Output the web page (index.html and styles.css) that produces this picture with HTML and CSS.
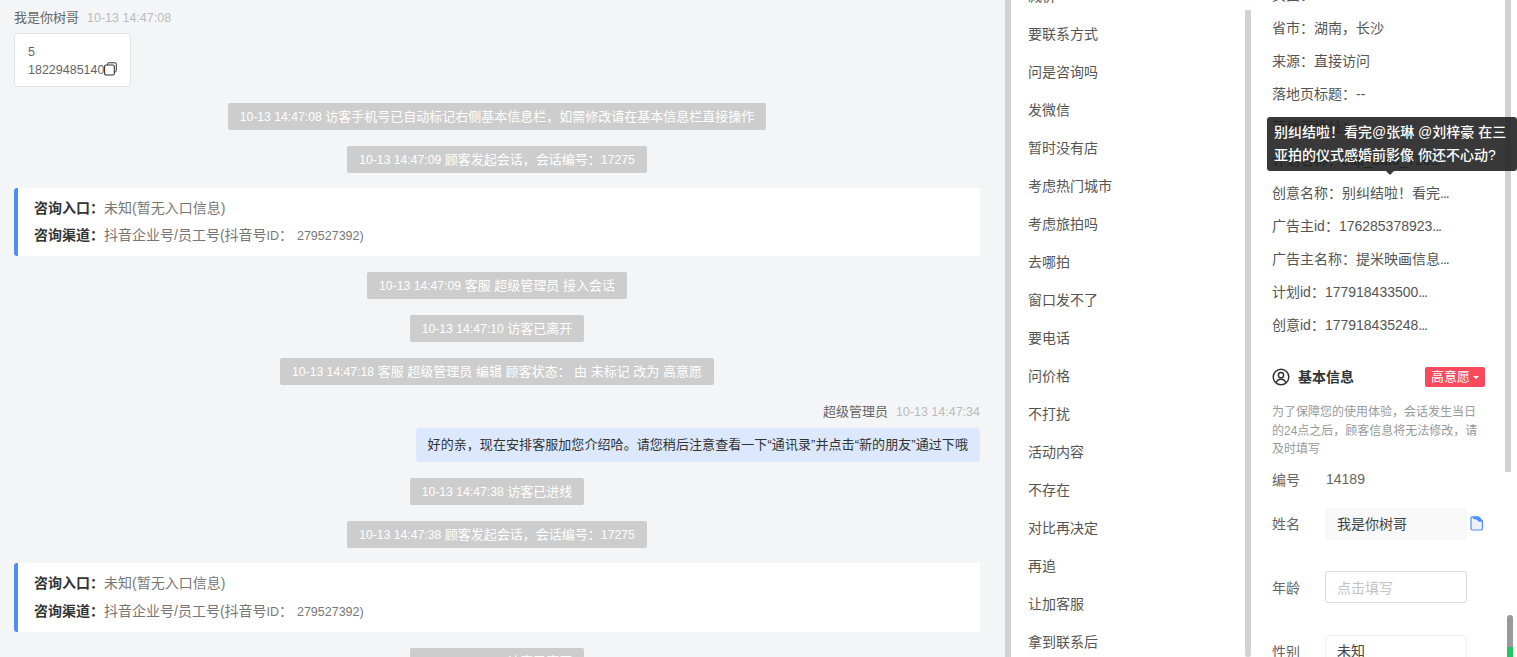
FILE: index.html
```html
<!DOCTYPE html>
<html lang="zh">
<head>
<meta charset="utf-8">
<title>会话</title>
<link rel="stylesheet" href="styles.css">
</head>
<body>
<div class="app">
  <main class="chat">
    <div class="meta"><span class="who">我是你树哥</span><span class="time">10-13 14:47:08</span></div>
    <div class="card">
      <div>5</div>
      <div class="phone">18229485140<svg class="copy" width="13" height="14" viewBox="0 0 13 14"><path d="M3.500 3V1.800q0-1 1-1h6.800q1 0 1 1v7q0 1-1 1h-1" fill="none" stroke="#333" stroke-width="1"/><rect x="0.600" y="3" width="9.700" height="10" rx="1.500" fill="none" stroke="#333" stroke-width="1.100"/></svg></div>
    </div>
    <div class="sys"><span class="ts">10-13 14:47:08</span> 访客手机号已自动标记右侧基本信息栏&#65292;如需修改请在基本信息栏直接操作</div>
    <div class="sys"><span class="ts">10-13 14:47:09</span> 顾客发起会话&#65292;会话编号&#65306;<span class="ts">17275</span></div>
    <div class="info">
      <p><b>咨询入口&#65306;</b>未知(暂无入口信息)</p>
      <p><b>咨询渠道&#65306;</b>抖音企业号/员工号(抖音号<span class="lat">ID</span>&#65306; <span class="lat">279527392)</span></p>
    </div>
    <div class="sys"><span class="ts">10-13 14:47:09</span> 客服 超级管理员 接入会话</div>
    <div class="sys"><span class="ts">10-13 14:47:10</span> 访客已离开</div>
    <div class="sys"><span class="ts">10-13 14:47:18</span> 客服 超级管理员 编辑 顾客状态&#65306; 由 未标记 改为 高意愿</div>
    <div class="meta right"><span class="who">超级管理员</span><span class="time">10-13 14:47:34</span></div>
    <div class="bubble">好的亲&#65292;现在安排客服加您介绍哈。请您稍后注意查看一下“通讯录”并点击“新的朋友”通过下哦</div>
    <div class="sys"><span class="ts">10-13 14:47:38</span> 访客已进线</div>
    <div class="sys"><span class="ts">10-13 14:47:38</span> 顾客发起会话&#65292;会话编号&#65306;<span class="ts">17275</span></div>
    <div class="info late">
      <p><b>咨询入口&#65306;</b>未知(暂无入口信息)</p>
      <p><b>咨询渠道&#65306;</b>抖音企业号/员工号(抖音号<span class="lat">ID</span>&#65306; <span class="lat">279527392)</span></p>
    </div>
    <div class="sys"><span class="ts">10-13 14:47:40</span> 访客已离开</div>
  </main>
  <div class="bar"></div>
  <nav class="list">
    <div class="item">减价</div>
    <div class="item">要联系方式</div>
    <div class="item">问是咨询吗</div>
    <div class="item">发微信</div>
    <div class="item">暂时没有店</div>
    <div class="item">考虑热门城市</div>
    <div class="item">考虑旅拍吗</div>
    <div class="item">去哪拍</div>
    <div class="item">窗口发不了</div>
    <div class="item">要电话</div>
    <div class="item">问价格</div>
    <div class="item">不打扰</div>
    <div class="item">活动内容</div>
    <div class="item">不存在</div>
    <div class="item">对比再决定</div>
    <div class="item">再追</div>
    <div class="item">让加客服</div>
    <div class="item">拿到联系后</div>
  </nav>
  <div class="bar bar-list"></div>
  <aside class="panel">
    <div class="rows">
      <div class="row">页面&#65306;</div>
      <div class="row">省市&#65306;湖南&#65292;长沙</div>
      <div class="row">来源&#65306;直接访问</div>
      <div class="row">落地页标题&#65306;--</div>
      <div class="row">落地页地址&#65306;</div>
      <div class="row">计划名称&#65306;cup_auto_720<span class="dots">...</span></div>
      <div class="row">创意名称&#65306;别纠结啦&#65281;看完<span class="dots">...</span></div>
      <div class="row">广告主id&#65306;176285378923<span class="dots">...</span></div>
      <div class="row">广告主名称&#65306;提米映画信息<span class="dots">...</span></div>
      <div class="row">计划id&#65306;177918433500<span class="dots">...</span></div>
      <div class="row">创意id&#65306;177918435248<span class="dots">...</span></div>
    </div>
    <div class="head">
      <svg class="user" width="18" height="18" viewBox="0 0 18 18"><circle cx="9" cy="9" r="7.800" fill="none" stroke="#333" stroke-width="1.500"/><circle cx="9" cy="7.200" r="2.600" fill="none" stroke="#333" stroke-width="1.500"/><path d="M4 14.600c1-2.400 2.800-3.400 5-3.400s4 1 5 3.400" fill="none" stroke="#333" stroke-width="1.500"/></svg>
      <span class="title">基本信息</span>
      <span class="tag">高意愿<i class="caret"></i></span>
    </div>
    <p class="note">为了保障您的使用体验&#65292;会话发生当日的24点之后&#65292;顾客信息将无法修改&#65292;请及时填写</p>
    <div class="field f-no"><label>编号</label><span class="val">14189</span></div>
    <div class="field f-name"><label>姓名</label><div class="input filled">我是你树哥</div>
      <svg class="note-ic" width="14" height="15" viewBox="0 0 14 15"><path d="M1 2.200q0-1.400 1.400-1.400h6l4 4v7.800q0 1.400-1.400 1.400H2.400q-1.400 0-1.400-1.400z" fill="#eef2ff" stroke="#4d8ef7" stroke-width="1.200"/><path d="M3 1h5.500l3.500 4v.8H8.500Q7.500 3 3 3z" fill="#4d8ef7"/></svg>
    </div>
    <div class="field f-age"><label>年龄</label><div class="input empty">点击填写</div></div>
    <div class="field f-sex"><label>性别</label><div class="input plain">未知</div></div>
  </aside>
  <div class="bar bar-panel"></div>
  <div class="edge"><div class="thumb"></div><div class="green"></div></div>
  <div class="tip">别纠结啦&#65281;看完@张琳 @刘梓豪 在三亚拍的仪式感婚前影像 你还不心动?<i class="tip-arrow"></i></div>
</div>
</body>
</html>
```
FILE: styles.css
```css
* { box-sizing: border-box; }
html, body { margin: 0; height: 100%; overflow: hidden; }
body { font-family: "Liberation Sans", "Noto Sans CJK SC", sans-serif; font-size: 13px; color: #333; background: #f4f5f7; }
.app { display: flex; width: 1517px; height: 657px; overflow: hidden; position: relative; }

.chat { width: 1005px; flex: none; padding: 9px 25px 0 14px; background: #f4f5f7; display: flex; flex-direction: column; height: 657px; overflow: hidden; }
.meta { display: flex; gap: 8px; height: 18px; line-height: 18px; align-items: center; flex: none; }
.meta.right { justify-content: flex-end; margin-top: 18px; }
.who { color: #666; }
.time { color: #bbb; font-size: 12.500px; }
.ts { font-size: 12.200px; }
.lat { font-size: 12.500px; }
.card { width: 117px; height: 54px; margin-top: 6px; flex: none; background: #fff; border: 1px solid #dfe1e5; border-radius: 4px; padding: 9px 13px 0; line-height: 18px; color: #666; font-size: 12.500px; }
.phone { display: flex; align-items: center; }
.copy { flex: none; margin-top: -2px; }
.sys { align-self: center; height: 27px; line-height: 27px; padding: 0 12px; margin-top: 16px; flex: none; background: #cdcdcd; color: #fff; border-radius: 2px; white-space: nowrap; }
.info { flex: none; height: 68px; margin-top: 15px; background: #fff; border-left: 4px solid #4d8ef7; border-radius: 3px 0 0 3px; padding: 7px 16px 0; font-size: 14px; }
.info.late { height: 69px; }
.info.late p + p { margin-top: 1px; }
.info p { margin: 0; height: 27px; line-height: 27px; color: #777; white-space: nowrap; }
.info b { color: #333; font-weight: 700; }
.bubble { align-self: flex-end; flex: none; margin-top: 7px; height: 34px; line-height: 34px; padding: 0 12px; background: #dbe8fd; border-radius: 4px; color: #333; white-space: nowrap; letter-spacing: .07px; }

.bar { width: 6px; flex: none; background: #d2d2d2; }
.list { width: 234px; flex: none; background: #fff; margin-top: -23px; padding-left: 17px; font-size: 14px; color: #555; }
.item { height: 38px; line-height: 38px; white-space: nowrap; }
.bar-list { background: linear-gradient(#fff 0 10px, #d2d2d2 10px); border-radius: 3px; }
.panel { width: 254px; flex: none; background: #fff; padding: 0 0 0 21px; font-size: 14px; color: #555; height: 657px; overflow: hidden; }
.rows { margin-top: -21px; }
.row { height: 33px; line-height: 33px; white-space: nowrap; }
.dots { letter-spacing: -1px; }
.head { display: flex; align-items: center; height: 20px; margin-top: 25px; width: 213px; }
.user { margin-right: 8px; }
.title { font-weight: 700; color: #333; margin-bottom: 2px; }
.tag { margin-left: auto; width: 60px; height: 20px; line-height: 20px; font-size: 13px; background: #f9495c; color: #fff; border-radius: 2px; display: flex; align-items: center; justify-content: center; gap: 3px; }
.caret { width: 0; height: 0; border: 3.500px solid transparent; border-top-color: #fff; border-bottom-width: 0; }
.note { margin: 16px 0 0; width: 213px; font-size: 12px; line-height: 18.500px; color: #999; }
.field { display: flex; align-items: center; width: 220px; }
.field label { width: 54px; flex: none; color: #666; }
.f-no { height: 20px; margin-top: 10px; }
.val { color: #666; }
.f-name { margin-top: 19px; height: 32px; }
.f-name label { margin-bottom: 2px; }
.input { width: 142px; margin-left: -1px; flex: none; height: 32px; line-height: 30px; padding: 0 11px; border-radius: 3px; border: 1px solid transparent; }
.filled { background: #f8f8f8; color: #444; }
.empty { border-color: #d9d9d9; color: #c4c4c4; line-height: 32px; }
.plain { border-color: #f0f0f0; color: #444; }
.note-ic { margin-left: 3px; }
.f-age { margin-top: 31px; height: 32px; }
.f-sex { margin-top: 32px; height: 32px; }

.bar-panel { background: linear-gradient(#d2d2d2 0 472px, #fff 472px); }
.edge { width: 6px; flex: none; background: #fff; position: relative; }
.thumb { position: absolute; left: -4px; top: 615px; width: 6px; height: 32px; background: #9a9a9a; border-radius: 3px 3px 0 0; }
.green { position: absolute; left: -4px; top: 647px; width: 6px; height: 10px; background: #22c55e; }

.tip { position: absolute; left: 1267px; top: 117px; width: 250px; height: 54px; padding: 4px 7px; background: rgba(30,30,30,.88); color: #fff; font-size: 14px; font-weight: 500; line-height: 23px; border-radius: 3px; }
.tip-arrow { position: absolute; left: 119px; bottom: -4px; width: 0; height: 0; border: 4px solid transparent; border-top-color: #393939; border-bottom-width: 0; }
```
